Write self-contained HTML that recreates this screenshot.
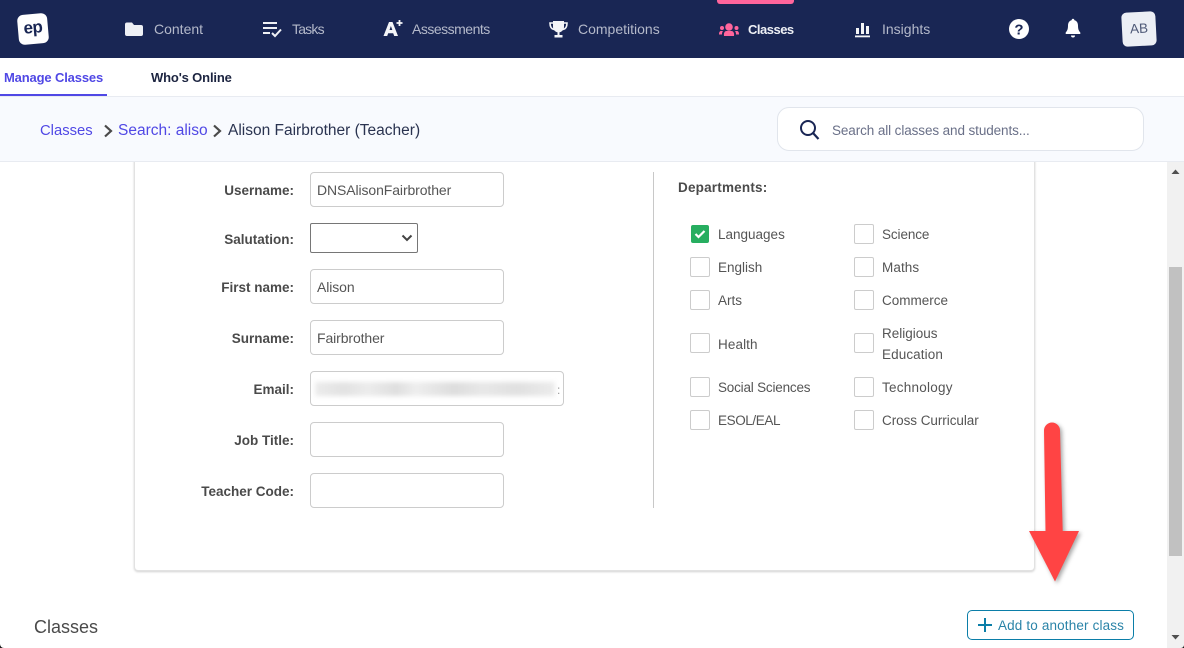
<!DOCTYPE html>
<html><head><meta charset="utf-8"><style>
html,body{margin:0;padding:0;background:#fff}
#p{position:relative;width:1184px;height:648px;overflow:hidden;background:#fff;font-family:"Liberation Sans",sans-serif;font-size:14px;color:#555}
#p>*{position:absolute}
.t{white-space:nowrap;line-height:20px;height:20px}
.n{top:19px;color:#b4b9ca;font-size:14px}
.in{box-sizing:border-box;height:35px;left:310px;width:194px;border:1px solid #ccc;border-radius:4px;background:#fff;padding:1px 6px 0;line-height:33px;color:#555;font-size:14px;letter-spacing:-.1px}
.l{width:160px;left:134px;text-align:right;font-weight:bold;color:#4a4a4a;font-size:13.5px;margin-top:1px}
.c{box-sizing:border-box;width:20px;height:20px;border:1px solid #ccc;border-radius:2px;background:#fff}
.d{font-size:13.5px;color:#555;margin-top:1px}
</style></head><body><div id="p">
<div style="left:0;top:0;width:1184px;height:58px;background:#192654"></div>
<div style="left:717px;top:0;width:77px;height:4px;background:#ff659c;border-radius:0 0 3px 3px"></div>
<div class="t" style="left:18px;top:14px;width:30px;height:30px;background:#fff;border-radius:6px;transform:rotate(-5deg);text-align:center;line-height:28px;font-weight:bold;font-size:17px;color:#192654;letter-spacing:-.5px">ep</div>

<svg style="left:0;top:0" width="1184" height="58" viewBox="0 0 1184 58">
<path d="M125 24.500a2 2 0 0 1 2-2h5l2 2.500h7a2 2 0 0 1 2 2v7a2 2 0 0 1-2 2h-14a2 2 0 0 1-2-2z" fill="#eef0f5"/>
<g fill="none" stroke="#eef0f5" stroke-width="2"><path d="M263 23h14M263 28h14M263 33h7"/><path d="M272 33l3 3 6-6.500" stroke-width="2"/></g>
<path d="M383.500 36l5.500-14h3.500l5.500 14h-3.800l-1-2.800h-5l-1 2.800zM389.500 30h2.800l-1.400-4z" fill="#f4f5f8" fill-rule="evenodd"/>
<path d="M399.500 20v6M396.500 23h6" stroke="#f4f5f8" stroke-width="1.800"/>
<path d="M553 21h11v6c0 3-2.500 5-4.500 5.300V35h3v2.500h-8V35h3v-2.700C555.500 32 553 30 553 27z" fill="#f4f5f8"/>
<path d="M553 23h-3c0 4 1.500 6 4 6.500M564 23h3c0 4-1.500 6-4 6.500" fill="none" stroke="#f4f5f8" stroke-width="1.600"/>
<g fill="#ff659c"><circle cx="729" cy="27" r="3.800"/><circle cx="722" cy="28" r="2"/><circle cx="736.500" cy="28" r="2"/><path d="M724 36c-.5-3.500 1-5 2.500-5h5c1.500 0 3 1.500 2.500 5z"/><path d="M719 34.500c0-2.500.8-3.500 2-3.500h2c-.8 1-1 2.200-1 3.500zM739 34.500c0-2.500-.8-3.500-2-3.500h-2c.8 1 1 2.200 1 3.500z"/></g>
<g fill="#f4f5f8"><rect x="856" y="28" width="3" height="6"/><rect x="861" y="23" width="3" height="11"/><rect x="866" y="26" width="3" height="8"/><rect x="855" y="35.500" width="15" height="1.800"/></g>
<circle cx="1019" cy="29" r="10" fill="#fff"/>
<text x="1019" y="34.500" text-anchor="middle" font-family="Liberation Sans" font-weight="bold" font-size="15" fill="#192654">?</text>
<path d="M1073 20c-3.500 0-5 2.700-5 5.500 0 4-1 5.500-2.300 7v1.500h14.600v-1.500c-1.300-1.500-2.300-3-2.300-7 0-2.800-1.500-5.500-5-5.500z" fill="#fff"/>
<path d="M1071 35.500h4a2 2 0 0 1-4 0z" fill="#fff"/><circle cx="1073" cy="20" r="1.300" fill="#fff"/>
</svg>

<div class="t n" style="left:154px">Content</div>
<div class="t n" style="left:292px;letter-spacing:-.8px">Tasks</div>
<div class="t n" style="left:412px;letter-spacing:-.5px">Assessments</div>
<div class="t n" style="left:578px">Competitions</div>
<div class="t n" style="left:748px;top:20px;color:#eef0f5;font-weight:bold;font-size:13px;letter-spacing:-.5px">Classes</div>
<div class="t n" style="left:882px">Insights</div>
<div class="t" style="left:1122px;top:12px;width:34px;height:34px;background:#eceff5;border-radius:5px;transform:rotate(-3deg);text-align:center;line-height:34px;font-size:13.500px;color:#4f5a78">AB</div>

<div style="left:0;top:96px;width:1184px;height:1px;background:#e8ebf1"></div>
<div style="left:0;top:94px;width:107px;height:2px;background:#5048e5"></div>
<div class="t" style="left:4px;top:68px;color:#5048e5;font-size:13px;font-weight:bold;letter-spacing:-.15px">Manage Classes</div>
<div class="t" style="left:151px;top:68px;color:#1c2440;font-size:13px;font-weight:bold;letter-spacing:-.15px">Who's Online</div>

<div style="box-sizing:border-box;left:134px;top:150px;width:901px;height:421px;background:#fff;border:1px solid #e2e2e2;border-top:0;border-radius:0 0 4px 4px;box-shadow:0 1px 2px rgba(0,0,0,.18)"></div>
<div style="left:0;top:97px;width:1184px;height:64px;background:#f8fafe"></div>
<div style="left:0;top:161px;width:1184px;height:1px;background:#e8ebf1"></div>
<div class="t" style="left:40px;top:121px;font-size:14.800px;color:#5048e5">Classes</div>
<div class="t" style="left:118px;top:121px;font-size:15.500px;color:#5048e5">Search: aliso</div>
<div class="t" style="left:228px;top:121px;font-size:15.500px;color:#2a3350">Alison Fairbrother (Teacher)</div>
<svg style="left:100px;top:120px" width="125" height="22"><path d="M5 5.500l6 5.500-6 5.500M114 5.500l6 5.500-6 5.500" fill="none" stroke="#4a4a4a" stroke-width="2.200"/></svg>
<div style="box-sizing:border-box;left:777px;top:107px;width:367px;height:44px;background:#fff;border:1px solid #e1e5ec;border-radius:12px"></div>
<svg style="left:798px;top:118px" width="24" height="24"><circle cx="10" cy="10" r="7" fill="none" stroke="#192654" stroke-width="2"/><path d="M15 15l5.500 6" stroke="#192654" stroke-width="2.200"/></svg>
<div class="t" style="left:832px;top:121px;font-size:13.500px;color:#6a7088;letter-spacing:-.1px">Search all classes and students...</div>

<div class="t l" style="top:180px">Username:</div><div class="in" style="top:172px">DNSAlisonFairbrother</div>
<div class="t l" style="top:229px">Salutation:</div>
<div style="box-sizing:border-box;left:310px;top:223px;width:108px;height:30px;border:1px solid #767676;border-radius:2px;background:#fff"></div>
<svg style="left:400px;top:232px" width="14" height="12"><path d="M2.500 3.500l4.500 4.500 4.500-4.500" fill="none" stroke="#444" stroke-width="2"/></svg>
<div class="t l" style="top:277px">First name:</div><div class="in" style="top:269px">Alison</div>
<div class="t l" style="top:328px">Surname:</div><div class="in" style="top:320px">Fairbrother</div>
<div class="t l" style="top:379px">Email:</div><div class="in" style="top:371px;width:254px"></div>
<div style="left:315px;top:382px;width:240px;height:14px;filter:blur(2.500px);background:linear-gradient(90deg,#ececec,#e2e2e2 12%,#ececec 22%,#dfdfdf 34%,#eeeeee 42%,#dddddd 58%,#e8e8e8 70%,#e0e0e0 84%,#ececec)"></div>
<div class="t" style="left:557px;top:380px;color:#999;font-size:12px">:</div>
<div class="t l" style="top:430px">Job Title:</div><div class="in" style="top:422px"></div>
<div class="t l" style="top:481px">Teacher Code:</div><div class="in" style="top:473px"></div>

<div style="left:653px;top:172px;width:1px;height:336px;background:#c8c8c8"></div>
<div class="t" style="left:678px;top:178px;font-weight:bold;color:#4a4a4a;font-size:13.500px;letter-spacing:.2px">Departments:</div>

<div style="left:691px;top:225px;width:18px;height:18px;background:#27ae60;border-radius:2px"></div>
<svg style="left:691px;top:225px" width="18" height="18"><path d="M4.500 9l3 3 6-6" fill="none" stroke="#fff" stroke-width="2.200"/></svg>
<div class="t d" style="left:718px;top:224px">Languages</div>
<div class="c" style="left:854px;top:224px"></div><div class="t d" style="left:882px;top:224px;letter-spacing:-.1px">Science</div>
<div class="c" style="left:690px;top:257px"></div><div class="t d" style="left:718px;top:257px">English</div>
<div class="c" style="left:854px;top:257px"></div><div class="t d" style="left:882px;top:257px;letter-spacing:.1px">Maths</div>
<div class="c" style="left:690px;top:290px"></div><div class="t d" style="left:718px;top:290px">Arts</div>
<div class="c" style="left:854px;top:290px"></div><div class="t d" style="left:882px;top:290px">Commerce</div>
<div class="c" style="left:690px;top:333px"></div><div class="t d" style="left:718px;top:334px;letter-spacing:.1px">Health</div>
<div class="c" style="left:854px;top:333px"></div><div class="t d" style="left:882px;top:323px">Religious</div><div class="t d" style="left:882px;top:344px;letter-spacing:.1px">Education</div>
<div class="c" style="left:690px;top:377px"></div><div class="t d" style="left:718px;top:377px;letter-spacing:-.2px">Social Sciences</div>
<div class="c" style="left:854px;top:377px"></div><div class="t d" style="left:882px;top:377px;letter-spacing:.25px">Technology</div>
<div class="c" style="left:690px;top:410px"></div><div class="t d" style="left:718px;top:410px;letter-spacing:-.4px">ESOL/EAL</div>
<div class="c" style="left:854px;top:410px"></div><div class="t d" style="left:882px;top:410px;letter-spacing:-.05px">Cross Curricular</div>

<div class="t" style="left:34px;top:617px;font-size:18px;color:#4a4a4a">Classes</div>
<div style="box-sizing:border-box;left:967px;top:610px;width:167px;height:30px;border:1px solid #0b7ea8;border-radius:5px;background:#fff"></div>
<svg style="left:977px;top:617px" width="16" height="16"><path d="M8 1v14M1 8h14" stroke="#0b7ea8" stroke-width="2"/></svg>
<div class="t" style="left:998px;top:616px;color:#2a84a8;font-size:13.500px;letter-spacing:.15px">Add to another class</div>

<svg style="left:1015px;top:415px;filter:drop-shadow(2px 2px 2px rgba(0,0,0,.35))" width="80" height="180"><path d="M29 15.500a8 8 0 0 1 16 0L47.700 116H64L40 166.500 14 116H30.500z" fill="#ff4444"/></svg>

<div style="left:1167px;top:162px;width:17px;height:486px;background:#f1f1f1"></div>
<div style="left:1169px;top:267px;width:13px;height:289px;background:#c1c1c1"></div>
<svg style="left:1167px;top:162px" width="17" height="486"><path d="M4.500 12l4-4.500 4 4.500z M4.500 473l4 4.500 4-4.500z" fill="#505050"/></svg>
<svg style="left:0;top:642px" width="1184" height="6"><path d="M0 2a4 4 0 0 0 4 4H0zM1184 3a3 3 0 0 1-3 3h3z" fill="#1a1a1a"/></svg>
</div></body></html>
